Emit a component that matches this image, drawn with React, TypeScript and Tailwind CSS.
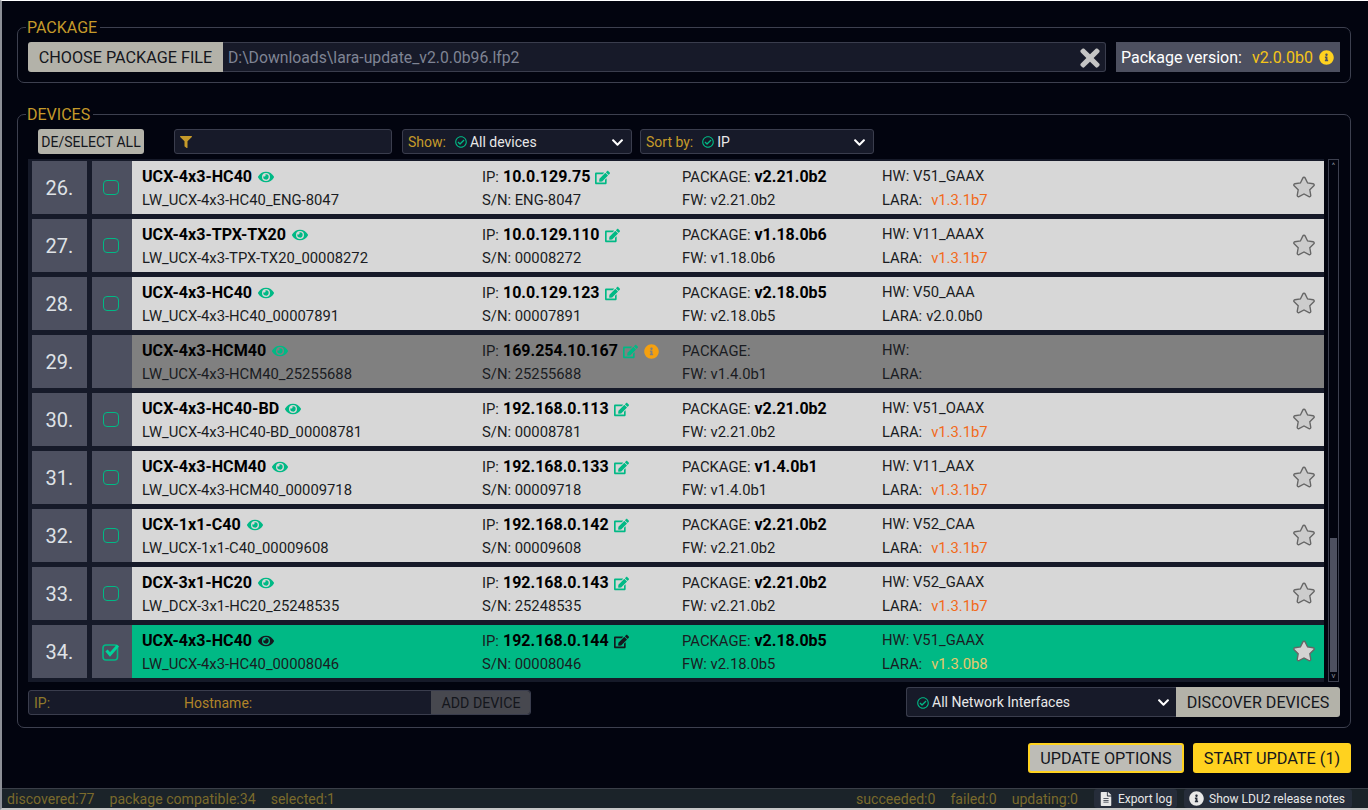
import React from 'react';
import { FaEye, FaEdit, FaInfoCircle, FaStar, FaTimes, FaFilter, FaRegCheckCircle, FaFileAlt, FaChevronDown } from 'react-icons/fa';

type Row = { n: number; name: string; host: string; ip: string; sn: string; pkg: string; fw: string; hw: string; lara: string; old?: boolean; state?: 'off' | 'sel'; warn?: boolean };

const rows: Row[] = [
  { n: 26, name: 'UCX-4x3-HC40', host: 'LW_UCX-4x3-HC40_ENG-8047', ip: '10.0.129.75', sn: 'ENG-8047', pkg: 'v2.21.0b2', fw: 'v2.21.0b2', hw: 'V51_GAAX', lara: 'v1.3.1b7', old: true },
  { n: 27, name: 'UCX-4x3-TPX-TX20', host: 'LW_UCX-4x3-TPX-TX20_00008272', ip: '10.0.129.110', sn: '00008272', pkg: 'v1.18.0b6', fw: 'v1.18.0b6', hw: 'V11_AAAX', lara: 'v1.3.1b7', old: true },
  { n: 28, name: 'UCX-4x3-HC40', host: 'LW_UCX-4x3-HC40_00007891', ip: '10.0.129.123', sn: '00007891', pkg: 'v2.18.0b5', fw: 'v2.18.0b5', hw: 'V50_AAA', lara: 'v2.0.0b0' },
  { n: 29, name: 'UCX-4x3-HCM40', host: 'LW_UCX-4x3-HCM40_25255688', ip: '169.254.10.167', sn: '25255688', pkg: '', fw: 'v1.4.0b1', hw: '', lara: '', state: 'off', warn: true },
  { n: 30, name: 'UCX-4x3-HC40-BD', host: 'LW_UCX-4x3-HC40-BD_00008781', ip: '192.168.0.113', sn: '00008781', pkg: 'v2.21.0b2', fw: 'v2.21.0b2', hw: 'V51_OAAX', lara: 'v1.3.1b7', old: true },
  { n: 31, name: 'UCX-4x3-HCM40', host: 'LW_UCX-4x3-HCM40_00009718', ip: '192.168.0.133', sn: '00009718', pkg: 'v1.4.0b1', fw: 'v1.4.0b1', hw: 'V11_AAX', lara: 'v1.3.1b7', old: true },
  { n: 32, name: 'UCX-1x1-C40', host: 'LW_UCX-1x1-C40_00009608', ip: '192.168.0.142', sn: '00009608', pkg: 'v2.21.0b2', fw: 'v2.21.0b2', hw: 'V52_CAA', lara: 'v1.3.1b7', old: true },
  { n: 33, name: 'DCX-3x1-HC20', host: 'LW_DCX-3x1-HC20_25248535', ip: '192.168.0.143', sn: '25248535', pkg: 'v2.21.0b2', fw: 'v2.21.0b2', hw: 'V52_GAAX', lara: 'v1.3.1b7', old: true },
  { n: 34, name: 'UCX-4x3-HC40', host: 'LW_UCX-4x3-HC40_00008046', ip: '192.168.0.144', sn: '00008046', pkg: 'v2.18.0b5', fw: 'v2.18.0b5', hw: 'V51_GAAX', lara: 'v1.3.0b8', old: true, state: 'sel' },
];

function Chevron() {
  return <FaChevronDown size={13} className="text-white" />;
}

function DeviceRow({ r }: { r: Row }) {
  const sel = r.state === 'sel';
  const off = r.state === 'off';
  const accent = sel ? 'text-[#14191f]' : 'text-[#00b985]';
  const bg = sel ? 'bg-[#00b985]' : off ? 'bg-[#808080]' : 'bg-[#d7d7d7]';
  return (
    <div className="flex h-[53px] shrink-0">
      <div className="flex w-[55px] items-center justify-center bg-[#4d5060] text-[20px] text-[#dfe2e6]">{r.n}.</div>
      <div className="ml-[5px] flex w-[40px] items-center justify-center bg-[#4d5060] pr-[2px]">
        {sel ? (
          <svg width="18" height="18" viewBox="0 0 18 18" fill="none">
            <rect x="1" y="2" width="14.5" height="15" rx="3" stroke="#00b985" strokeWidth="1.6" />
            <path d="M4.5 7.5 L8 11.5 L16 2.5" stroke="#00d39a" strokeWidth="3" />
          </svg>
        ) : off ? null : (
          <div className="h-[15px] w-[16px] rounded-[4px] border-[1.5px] border-[#00b985]" />
        )}
      </div>
      <div className={`flex flex-1 items-start pb-[2px] pt-[4px] text-[14.8px] leading-[24px] text-[#1a1c22] ${bg}`}>
        <div className="w-[350px] pl-[10px]">
          <div className="flex items-center text-[16.1px] font-bold text-black">
            {r.name}
            <FaEye size={16} className={`ml-[6px] ${accent}`} />
          </div>
          <div className="-mt-px">{r.host}</div>
        </div>
        <div className="w-[200px]">
          <div className="flex items-center">
            IP:<span className="ml-[4px] text-[16px] font-bold text-black">{r.ip}</span>
            <FaEdit size={15} className={`ml-[5px] ${accent}`} />
            {r.warn && <FaInfoCircle size={15} className="ml-[6px] text-[#f5a00f]" />}
          </div>
          <div className="-mt-px">S/N: {r.sn}</div>
        </div>
        <div className="w-[200px]">
          <div className="flex items-center">
            PACKAGE:<span className="ml-[4px] text-[16px] font-bold text-black">{r.pkg}</span>
          </div>
          <div className="-mt-px">FW: {r.fw}</div>
        </div>
        <div className="-mt-px flex-1">
          <div>HW: {r.hw && r.hw}</div>
          <div>
            LARA:
            {r.lara && (
              <span className={r.old ? (sel ? 'ml-[9px] text-[#e8c86c]' : 'ml-[9px] text-[#f26a1b]') : 'ml-[4px]'}>{r.lara}</span>
            )}
          </div>
        </div>
        {!off && (
          <div className="mr-[9px] flex h-[44px] items-center">
            <FaStar
              size={22}
              className={sel ? 'text-[#d3d3d3]' : 'text-[#cccccc]'}
              stroke="#666666"
              strokeWidth={36}
            />
          </div>
        )}
      </div>
    </div>
  );
}

export default function App() {
  return (
    <div className="flex h-[810px] w-[1368px] flex-col overflow-hidden border-t border-b-2 border-l-2 border-t-white border-b-[#c8c8c8] border-l-[#8c8f96] bg-[#02040f] pt-[17px] font-[Roboto,sans-serif] text-[14px]">
      <fieldset className="ml-[15px] mr-[17px] rounded-[7px] border border-[#3d404f] px-[10px] pb-[10px] pt-[5px]">
        <legend className="-ml-[2px] h-[19px] pl-[1px] pr-[3px] text-[16px] leading-[19px] text-[#c59a2a]">PACKAGE</legend>
        <div className="flex h-[30px]">
          <button className="w-[195px] rounded-l-[3px] bg-[#b3b2a9] pt-[2px] text-[16.2px] text-[#14161c]">CHOOSE PACKAGE FILE</button>
          <div className="flex flex-1 items-center justify-between rounded-r-[3px] border border-l-0 border-[#3a3d4d] bg-[#171a29] pl-[5px] pr-[1px] pt-[1px] text-[15.75px] text-[#7f8494]">
            <span>D:\Downloads\lara-update_v2.0.0b96.lfp2</span>
            <FaTimes size={28} className="text-[#c4c4c4]" />
          </div>
          <div className="ml-[10px] flex w-[224px] items-center bg-[#4d5060] pl-[5px] pt-[1px] text-[16px] text-white">
            Package version:
            <span className="ml-[10px] text-[#f5c518]">v2.0.0b0</span>
            <FaInfoCircle size={15} className="ml-[6px] text-[#ffd21f]" />
          </div>
        </div>
      </fieldset>

      <fieldset className="ml-[15px] mr-[17px] mt-[22px] rounded-[7px] border border-[#3d404f] px-[10px] pb-[10px] pt-[5px]">
        <legend className="-ml-[2px] h-[19px] pl-[1px] pr-[3px] text-[16px] leading-[19px] text-[#c59a2a]">DEVICES</legend>
        <div className="flex h-[25px] items-stretch pl-[10px]">
          <button className="w-[106px] rounded-[3px] bg-[#b3b2a9] pt-[1px] text-[14px] text-[#14161c]">DE/SELECT ALL</button>
          <div className="ml-[30px] flex w-[218px] items-center rounded-[3px] border border-[#3a3d4d] bg-[#171a29] pl-[5px]">
            <FaFilter size={12} className="text-[#c59a2a]" />
          </div>
          <div className="ml-[10px] flex w-[230px] items-center justify-between rounded-[3px] border border-[#3a3d4d] bg-[#171a29] pl-[5px] pr-[7px] pt-[1px]">
            <div className="flex items-center">
              <span className="text-[#c59a2a]">Show:</span>
              <FaRegCheckCircle size={12} className="ml-[9px] text-[#00b985]" />
              <span className="ml-[3px] text-[#e8e8e8]">All devices</span>
            </div>
            <Chevron />
          </div>
          <div className="ml-[8px] flex w-[234px] items-center justify-between rounded-[3px] border border-[#3a3d4d] bg-[#171a29] pl-[5px] pr-[7px] pt-[1px]">
            <div className="flex items-center">
              <span className="text-[#c59a2a]">Sort by:</span>
              <FaRegCheckCircle size={12} className="ml-[9px] text-[#00b985]" />
              <span className="ml-[3px] text-[#e8e8e8]">IP</span>
            </div>
            <Chevron />
          </div>
        </div>

        <div className="mt-[5px] flex h-[523px]">
          <div className="flex w-[1296px] flex-col gap-[5px] overflow-hidden bg-[#161a29] pb-[4px] pl-[4px] pt-[2px]">
            {rows.map((r) => (
              <DeviceRow key={r.n} r={r} />
            ))}
          </div>
          <div className="ml-[4px] flex w-[11px] flex-col items-center border border-[#3d404f] bg-[#02040f]">
            <span className="h-[10px] text-[8px] leading-[12px] text-[#8a8d99]">^</span>
            <div className="mt-auto h-[134px] w-[7px] bg-[#4d5060]" />
            <span className="h-[9px] text-[8px] leading-[7px] text-[#8a8d99]">v</span>
          </div>
        </div>

        <div className="mt-[5px] flex items-start justify-between">
          <div className="mt-[3px] flex h-[25px] w-[503px] rounded-[3px] border border-[#3a3d4d] bg-[#171a29]">
            <div className="flex flex-1 items-center pl-[5px] pt-[1px]">
              <span className="w-[150px] text-[#8f7a2c]">IP:</span>
              <span className="text-[#b08428]">Hostname:</span>
            </div>
            <div className="flex w-[99px] items-center justify-center rounded-r-[3px] bg-[#47484f] pl-[1px] pt-[2px] text-[14.2px] text-[#14161c]">ADD DEVICE</div>
          </div>
          <div className="flex h-[30px]">
            <div className="flex w-[270px] items-center justify-between rounded-l-[3px] border border-r-0 border-[#3a3d4d] bg-[#171a29] pl-[10px] pr-[6px] pt-[1px]">
              <div className="flex items-center">
                <FaRegCheckCircle size={12} className="text-[#00b985]" />
                <span className="ml-[3px] text-[#e8e8e8]">All Network Interfaces</span>
              </div>
              <Chevron />
            </div>
            <button className="w-[164px] rounded-r-[3px] bg-[#b3b2a9] pt-[2px] text-[16.1px] text-[#14161c]">DISCOVER DEVICES</button>
          </div>
        </div>
      </fieldset>

      <div className="mr-[17px] mt-[15px] flex justify-end gap-[9px]">
        <button className="h-[30px] w-[156px] rounded-[3px] border-2 border-[#ffd21f] bg-[#bdbcb6] pt-[2px] text-[16.2px] text-[#14161c]">UPDATE OPTIONS</button>
        <button className="h-[30px] w-[158px] rounded-[3px] bg-[#ffd21f] pt-[2px] text-[16.3px] text-[#14161c]">START UPDATE (1)</button>
      </div>

      <div className="mt-auto flex h-[20px] items-center border-t border-[#3a3f48] bg-[#1b2329] pl-[5px] pr-[16px] pt-[2px] text-[14.1px] text-[#7a6a2c]">
        <span>discovered:77</span>
        <span className="ml-[15px]">package compatible:34</span>
        <span className="ml-[15px]">selected:1</span>
        <span className="ml-auto">succeeded:0</span>
        <span className="ml-[15px]">failed:0</span>
        <span className="ml-[15px]">updating:0</span>
        <div className="ml-[16px] -mt-[2px] flex h-[19px] w-[83px] items-center gap-[5px] rounded-[3px] bg-[#262d3a] pl-[5px] text-[12px] text-[#e8e8e8]">
          <FaFileAlt size={14} />
          Export log
        </div>
        <div className="ml-[7px] -mt-[2px] flex h-[19px] w-[168px] items-center gap-[5px] rounded-[3px] bg-[#262d3a] pl-[5px] text-[12px] text-[#e8e8e8]">
          <FaInfoCircle size={15} />
          Show LDU2 release notes
        </div>
      </div>
    </div>
  );
}
